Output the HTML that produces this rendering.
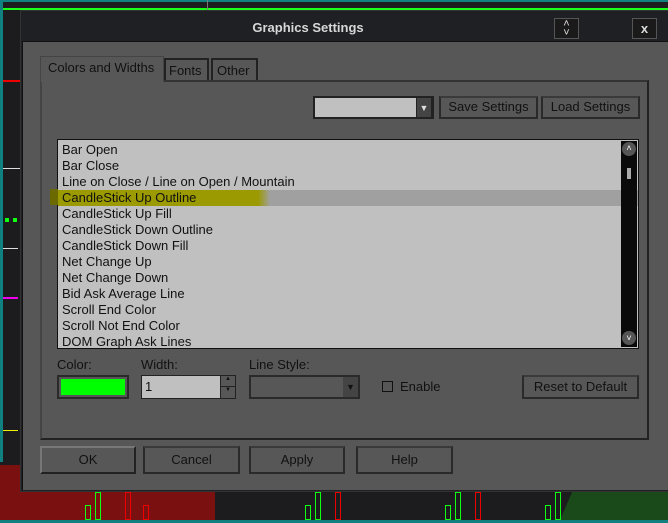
<!DOCTYPE html>
<html><head><style>
*{margin:0;padding:0;box-sizing:border-box}
body{width:668px;height:523px;background:#1c1c1e;position:relative;overflow:hidden;font-family:"Liberation Sans",sans-serif;font-size:13px;color:#111}
.a{position:absolute}
.btn{position:absolute;background:#575757;border:2px solid #2a2a2a;border-top-color:#3a3a3a;text-align:center;color:#111;font-size:13px}
.list div{height:16px;line-height:16px;padding-left:4px;white-space:nowrap}
</style></head><body>
<div class="a" style="left:0;top:0;width:3px;height:523px;background:#118080"></div>
<div class="a" style="left:0;top:520px;width:668px;height:3px;background:#118080"></div>
<div class="a" style="left:0;top:0;width:668px;height:2px;background:#118080"></div>
<div class="a" style="left:3px;top:8px;width:665px;height:2px;background:#1aff1a"></div>
<div class="a" style="left:207px;top:0;width:1px;height:10px;background:#777"></div>
<div class="a" style="left:3px;top:80px;width:17px;height:2px;background:#e00"></div>
<div class="a" style="left:3px;top:168px;width:17px;height:1px;background:#ddd"></div>
<div class="a" style="left:5px;top:218px;width:4px;height:4px;background:#1f1"></div>
<div class="a" style="left:13px;top:218px;width:4px;height:4px;background:#1f1"></div>
<div class="a" style="left:3px;top:248px;width:15px;height:1px;background:#ddd"></div>
<div class="a" style="left:3px;top:297px;width:15px;height:2px;background:#e0e"></div>
<div class="a" style="left:3px;top:430px;width:15px;height:1px;background:#ee0"></div>
<div class="a" style="left:0;top:462px;width:668px;height:58px;background:#1c1c1e"></div>
<div class="a" style="left:0;top:465px;width:215px;height:55px;background:#7a1010"></div>
<div class="a" style="left:560px;top:470px;width:108px;height:50px;background:#1a4a1a;clip-path:polygon(20% 0,100% 0,100% 100%,0 100%)"></div>
<div class="a" style="left:85px;top:505px;width:6px;height:15px;border:1px solid #1f1"></div>
<div class="a" style="left:95px;top:492px;width:6px;height:28px;border:1px solid #1f1"></div>
<div class="a" style="left:125px;top:492px;width:6px;height:28px;border:1px solid #e00"></div>
<div class="a" style="left:143px;top:505px;width:6px;height:15px;border:1px solid #e00"></div>
<div class="a" style="left:305px;top:505px;width:6px;height:15px;border:1px solid #1f1"></div>
<div class="a" style="left:315px;top:492px;width:6px;height:28px;border:1px solid #1f1"></div>
<div class="a" style="left:335px;top:492px;width:6px;height:28px;border:1px solid #e00"></div>
<div class="a" style="left:445px;top:505px;width:6px;height:15px;border:1px solid #1f1"></div>
<div class="a" style="left:455px;top:492px;width:6px;height:28px;border:1px solid #1f1"></div>
<div class="a" style="left:475px;top:492px;width:6px;height:28px;border:1px solid #e00"></div>
<div class="a" style="left:555px;top:492px;width:6px;height:28px;border:1px solid #1f1"></div>
<div class="a" style="left:545px;top:505px;width:6px;height:15px;border:1px solid #1f1"></div>
<!-- dialog -->
<div class="a" style="left:20px;top:10px;width:650px;height:482px;background:#1f2024;border:1px solid #333"></div>
<div class="a" style="left:208px;top:20px;width:200px;text-align:center;font-weight:bold;color:#d8d8d8;font-size:13px">Graphics Settings</div>
<div class="a" style="left:554px;top:18px;width:25px;height:21px;border:1px solid #555;background:#1a1a1a;color:#ddd;text-align:center;font-size:11px;line-height:9px;padding-top:1px">&#708;<br>&#709;</div>
<div class="a" style="left:632px;top:18px;width:25px;height:21px;border:1px solid #555;background:#1a1a1a;color:#ddd;text-align:center;font-weight:bold;line-height:19px">x</div>
<div class="a" style="left:22px;top:41px;width:646px;height:449px;background:#575757;border-top:1px solid #111;border-left:1px solid #111"></div>
<!-- tabs -->
<div class="a" style="left:40px;top:80px;width:609px;height:360px;border:2px solid #222;border-top-color:#333;border-left-color:#444"></div>
<div class="a" style="left:40px;top:56px;width:124px;height:26px;background:#575757;border:1px solid #444;border-bottom:none;padding:3px 0 0 7px">Colors and Widths</div>
<div class="a" style="left:164px;top:58px;width:45px;height:22px;border:2px solid #222;border-bottom:none;padding:3px 0 0 3px">Fonts</div>
<div class="a" style="left:211px;top:58px;width:47px;height:22px;border:2px solid #222;border-bottom:none;padding:3px 0 0 4px">Other</div>
<!-- top controls -->
<div class="a" style="left:313px;top:96px;width:121px;height:23px;background:#c0c0c0;border:2px solid #222"></div>
<div class="a" style="left:416px;top:97px;width:16px;height:21px;background:#444;border:1px solid #222;color:#ddd;font-size:9px;text-align:center;line-height:20px">&#9660;</div>
<div class="btn" style="left:439px;top:96px;width:99px;height:23px;line-height:18px">Save Settings</div>
<div class="btn" style="left:541px;top:96px;width:99px;height:23px;line-height:18px">Load Settings</div>
<!-- list -->
<div class="a list" style="left:57px;top:139px;width:582px;height:210px;background:#c0c0c0;border:1px solid #111;padding-top:2px;overflow:hidden">
<div>Bar Open</div><div>Bar Close</div><div>Line on Close / Line on Open / Mountain</div>
<div style="background:linear-gradient(90deg,#9b9a00 0,#9b9a00 200px,#a0a0a0 212px)">CandleStick Up Outline</div>
<div>CandleStick Up Fill</div><div>CandleStick Down Outline</div><div>CandleStick Down Fill</div><div>Net Change Up</div><div>Net Change Down</div><div>Bid Ask Average Line</div><div>Scroll End Color</div><div>Scroll Not End Color</div><div>DOM Graph Ask Lines</div>
</div>
<div class="a" style="left:50px;top:189px;width:8px;height:16px;background:#6a6a00"></div>
<div class="a" style="left:621px;top:141px;width:16px;height:206px;background:#0a0a0a"></div>
<div class="a" style="left:622px;top:142px;width:14px;height:14px;border-radius:50%;background:#555;color:#fff;font-size:9px;text-align:center;line-height:12px">&#708;</div>
<div class="a" style="left:622px;top:331px;width:14px;height:14px;border-radius:50%;background:#555;color:#fff;font-size:9px;text-align:center;line-height:14px">&#709;</div>
<div class="a" style="left:627px;top:168px;width:4px;height:11px;background:#aaa"></div>
<!-- bottom controls -->
<div class="a" style="left:57px;top:357px">Color:</div>
<div class="a" style="left:141px;top:357px">Width:</div>
<div class="a" style="left:249px;top:357px">Line Style:</div>
<div class="a" style="left:57px;top:375px;width:72px;height:24px;border:2px solid #2a2a2a;background:#575757;padding:2px"><div style="width:100%;height:100%;background:#00ff00"></div></div>
<div class="a" style="left:141px;top:375px;width:95px;height:24px;background:#c0c0c0;border:1px solid #222;padding:3px 0 0 3px">1</div>
<div class="a" style="left:220px;top:376px;width:15px;height:22px;background:#575757;border-left:1px solid #222"><div style="height:11px;border-bottom:1px solid #222;font-size:6px;text-align:center;color:#111">&#9650;</div><div style="font-size:6px;text-align:center;color:#111">&#9660;</div></div>
<div class="a" style="left:249px;top:375px;width:111px;height:24px;border:2px solid #2a2a2a"></div>
<div class="a" style="left:343px;top:377px;width:15px;height:20px;background:#444;font-size:9px;text-align:center;line-height:20px;color:#111">&#9660;</div>
<div class="a" style="left:382px;top:381px;width:11px;height:11px;border:1px solid #111"></div>
<div class="a" style="left:400px;top:379px">Enable</div>
<div class="btn" style="left:522px;top:375px;width:117px;height:24px;line-height:19px">Reset to Default</div>
<div class="btn" style="left:40px;top:446px;width:96px;height:28px;line-height:24px;border-color:#777 #222 #222 #777">OK</div>
<div class="btn" style="left:143px;top:446px;width:97px;height:28px;line-height:24px">Cancel</div>
<div class="btn" style="left:249px;top:446px;width:96px;height:28px;line-height:24px">Apply</div>
<div class="btn" style="left:356px;top:446px;width:97px;height:28px;line-height:24px">Help</div>
</body></html>
